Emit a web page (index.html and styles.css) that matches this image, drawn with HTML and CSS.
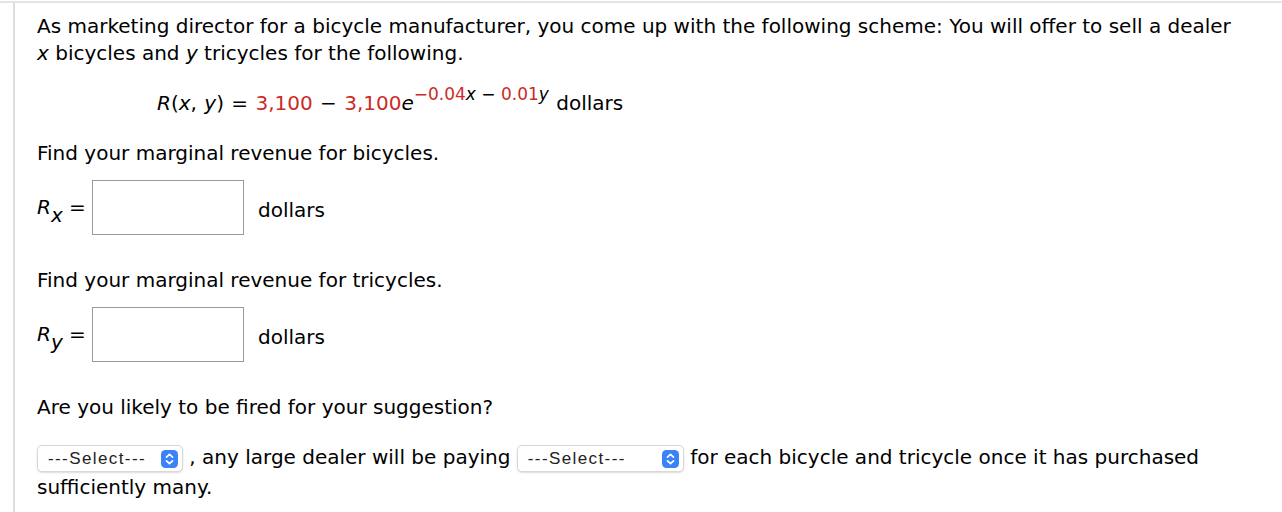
FILE: index.html
```html
<!DOCTYPE html>
<html>
<head>
<meta charset="utf-8">
<link rel="stylesheet" href="styles.css">
</head>
<body>
<div class="frame">
  <div class="question">
    <p class="intro">As marketing director for a bicycle manufacturer, you come up with the following scheme: You will offer to sell a dealer <i>x</i> bicycles and <i>y</i> tricycles for the following.</p>
    <div class="formula"><i>R</i>(<i>x</i>, <i>y</i>) = <span class="red">3,100</span> − <span class="red">3,100</span><i>e</i><sup><span class="red">−0.04</span><i>x</i> − <span class="red">0.01</span><i>y</i></sup> dollars</div>
    <p class="prompt">Find your marginal revenue for bicycles.</p>
    <div class="answer-row">
      <span class="label"><i>R</i><sub><i>x</i></sub> =</span>
      <input class="box" type="text">
      <span class="unit">dollars</span>
    </div>
    <p class="prompt second">Find your marginal revenue for tricycles.</p>
    <div class="answer-row">
      <span class="label"><i>R</i><sub><i>y</i></sub> =</span>
      <input class="box" type="text">
      <span class="unit">dollars</span>
    </div>
    <p class="prompt second">Are you likely to be fired for your suggestion?</p>
    <p class="final"><span class="sel sel1"><span class="sel-text">---Select---</span><svg class="chev" viewBox="0 0 17 18" width="17" height="18"><rect x="0" y="0" width="17" height="18" rx="4.5" fill="#3b82f6"/><path d="M5.5 7.2 L8.5 4.4 L11.5 7.2 M5.5 10.8 L8.5 13.6 L11.5 10.8" fill="none" stroke="#fff" stroke-width="1.7" stroke-linecap="round" stroke-linejoin="round"/></svg></span> <span>, any large dealer will be paying</span> <span class="sel sel2"><span class="sel-text">---Select---</span><svg class="chev" viewBox="0 0 17 18" width="17" height="18"><rect x="0" y="0" width="17" height="18" rx="4.5" fill="#3b82f6"/><path d="M5.5 7.2 L8.5 4.4 L11.5 7.2 M5.5 10.8 L8.5 13.6 L11.5 10.8" fill="none" stroke="#fff" stroke-width="1.7" stroke-linecap="round" stroke-linejoin="round"/></svg></span> <span>for each bicycle and tricycle once it has purchased</span> <span>sufficiently many.</span></p>
  </div>
</div>
</body>
</html>
```

FILE: styles.css
```css
html, body {
  margin: 0;
  padding: 0;
  background: #fff;
}
body {
  font-family: "DejaVu Sans", Verdana, sans-serif;
  color: #000;
}
.frame {
  border-top: 2px solid #e4e4e4;
  margin-top: 1px;
  padding-left: 13px;
}
.question {
  border-left: 2px solid #dcdcdc;
  padding: 10px 45px 14px 22px;
  font-size: 20px;
  line-height: 27px;
}
p {
  margin: 0;
}
.formula {
  padding-left: 120px;
  margin-top: 23px;
  line-height: 27px;
  word-spacing: 1px;
}
.red {
  color: #cc2b1f;
}
sup {
  font-size: 17px;
  line-height: 0;
  vertical-align: 10px;
  word-spacing: 0;
}
.prompt {
  margin-top: 23px;
}
.prompt.second {
  margin-top: 32px;
}
.answer-row {
  display: flex;
  align-items: center;
  margin-top: 13px;
}
.label {
  width: 55px;
}
sub {
  font-size: 20px;
  line-height: 0;
  vertical-align: -8px;
}
.box {
  box-sizing: border-box;
  width: 152px;
  height: 55px;
  border: 1px solid #9a9a9a;
  border-radius: 0;
  margin: 0;
  padding: 0;
  outline: none;
}
.unit {
  margin-left: 14px;
  margin-top: 6px;
}
.final {
  margin-top: 21px;
  line-height: 30px;
}
.sel {
  display: inline-flex;
  align-items: center;
  justify-content: space-between;
  vertical-align: middle;
  box-sizing: border-box;
  height: 27px;
  border: 1px solid #d8d8d8;
  border-radius: 5px;
  box-shadow: 0 1px 2px rgba(0,0,0,0.14);
  background: #fff;
  padding: 0 4px 0 10px;
}
.sel-text {
  font-family: "Liberation Sans", Arial, sans-serif;
  font-size: 17px;
  letter-spacing: 1.4px;
  line-height: 20px;
  color: #222;
}
.sel1 {
  width: 146px;
}
.sel2 {
  width: 167px;
}
.chev {
  display: block;
  flex: none;
}
```
